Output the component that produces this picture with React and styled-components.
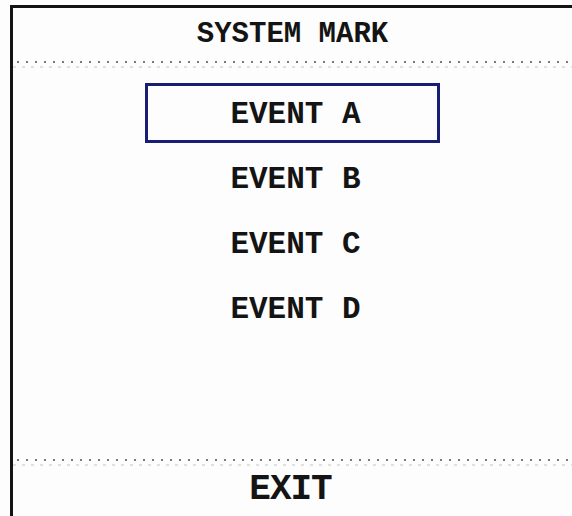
import React from 'react';
import styled, { createGlobalStyle } from 'styled-components';

const events = ['EVENT A', 'EVENT B', 'EVENT C', 'EVENT D'];

const GlobalStyle = createGlobalStyle`
	html, body {
		margin: 0;
		padding: 0;
		background: #fdfdfd;
	}
`;

const App = () => {
	return (
		<Page>
			<GlobalStyle />
			<Panel>
				<Header>
					<Title>SYSTEM MARK</Title>
				</Header>

				<Separator />

				<List>
					{events.map((label, i) => (
						<Item key={label} selected={i === 0}>
							{label}
						</Item>
					))}
				</List>

				<Separator />

				<Footer>
					<Exit>EXIT</Exit>
				</Footer>
			</Panel>
		</Page>
	);
};

const Page = styled.div`
	width: 572px;
	height: 516px;
	overflow: hidden;
	padding: 5px 0 0 10px;
	box-sizing: border-box;
	font-family: 'Liberation Mono', 'Courier New', monospace;
	color: #141414;
`;

const Panel = styled.div`
	display: flex;
	flex-direction: column;
	height: 100%;
	border-top: 3px solid #141414;
	border-left: 3px solid #141414;
	background: #fdfdfd;
`;

const Header = styled.div`
	height: 53px;
	display: flex;
	align-items: center;
	justify-content: center;
	box-sizing: border-box;
`;

const Title = styled.h1`
	margin: 0;
	font-size: 29px;
	font-weight: bold;
	line-height: 1;
`;

const Separator = styled.div`
	height: 8px;
	background-image: linear-gradient(to right, #7a7a7a 2px, transparent 2px),
		linear-gradient(to right, #e0e0e0 3px, transparent 3px);
	background-size: 9px 2px, 9px 2px;
	background-position: 4px 0, 0 5px;
	background-repeat: repeat-x;
`;

const List = styled.div`
	flex: 1;
	display: flex;
	flex-direction: column;
	align-items: center;
	gap: 5px;
	padding-top: 14px;
`;

const Item = styled.div`
	width: 295px;
	height: 60px;
	box-sizing: border-box;
	border: 3px solid ${(p) => (p.selected ? '#1a1d74' : 'transparent')};
	display: flex;
	align-items: center;
	justify-content: center;
	font-size: 31px;
	font-weight: bold;
	line-height: 1;
	padding-top: 2px;
	padding-left: 6px;
	transform-origin: center;
`;

const Footer = styled.div`
	height: 52px;
	display: flex;
	align-items: center;
	justify-content: center;
	padding-bottom: 6px;
	box-sizing: border-box;
`;

const Exit = styled.div`
	font-size: 36px;
	font-weight: bold;
	line-height: 1;
	letter-spacing: -1px;
	padding-right: 4px;
`;

export default App;
